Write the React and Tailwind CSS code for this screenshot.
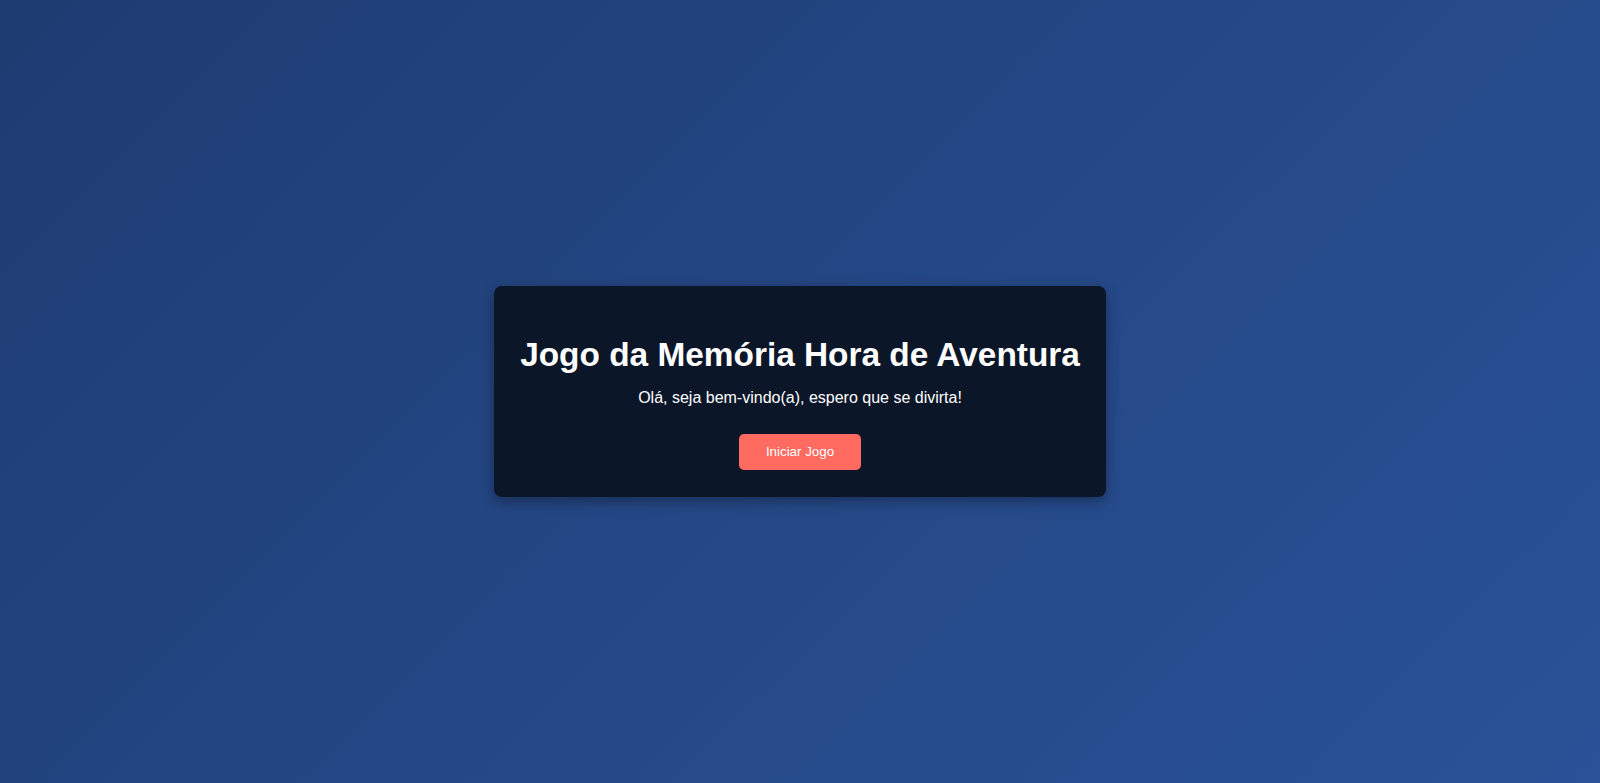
import React from "react";

export default function App() {
  return (
    <div
      className="min-h-screen w-full flex items-center justify-center bg-[linear-gradient(135deg,#1e3c72,#2a5298)]"
      style={{ fontFamily: '"Liberation Sans", Arial, sans-serif' }}
    >
      <div className="w-[612px] rounded-[8px] bg-[#0b1629] shadow-[0_4px_14px_rgba(0,0,0,0.35)] pt-[50px] pb-[27px] flex flex-col items-center text-center">
        <h1 className="text-[33.4px] leading-[38px] font-bold text-white">
          Jogo da Memória Hora de Aventura
        </h1>
        <p className="mt-[14px] text-[16px] leading-[19px] text-white">
          Olá, seja bem-vindo(a), espero que se divirta!
        </p>
        <button className="mt-[27px] w-[122px] h-[36px] rounded-[5px] bg-[#ff6b61] text-white text-[13.333px] flex items-center justify-center">
          Iniciar Jogo
        </button>
      </div>
    </div>
  );
}
